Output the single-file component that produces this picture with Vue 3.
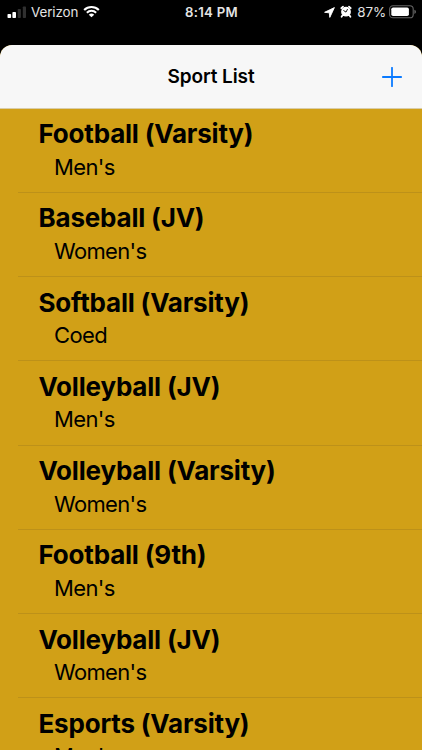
<template>
  <div class="phone">
    <header class="status-bar">
      <div class="status-left">
        <svg class="signal" width="20" height="14" viewBox="0 0 20 14">
          <rect x="0.5" y="9" width="3.6" height="4" rx="0.8" fill="#fff" />
          <rect x="5.4" y="7" width="3.6" height="6" rx="0.8" fill="#fff" />
          <rect x="10.7" y="4" width="3.2" height="9" rx="0.8" fill="#303030" />
          <rect x="15.8" y="1.5" width="3.2" height="11.5" rx="0.8" fill="#303030" />
        </svg>
        <span class="carrier">Verizon</span>
        <svg class="wifi" width="17" height="13" viewBox="0 0 18 14">
          <path d="M1.1 5.3a11.4 11.4 0 0 1 15.8 0" fill="none" stroke="#fff" stroke-width="2.3" />
          <path d="M4 8.3a7.2 7.2 0 0 1 10 0" fill="none" stroke="#fff" stroke-width="2.2" />
          <path d="M6.1 10.5a4.2 4.2 0 0 1 5.8 0L9 13.3z" fill="#fff" />
        </svg>
      </div>
      <div class="time">8:14 PM</div>
      <div class="status-right">
        <svg class="location" width="11" height="11" viewBox="0 0 11 11">
          <path d="M10.4 0.6L0.6 5.3L5.3 5.8L5.8 10.4z" fill="#fff" stroke="#fff" stroke-width="0.9" stroke-linejoin="round" />
        </svg>
        <svg class="alarm" width="12" height="13" viewBox="0 0 12 13">
          <circle cx="6" cy="6.7" r="4.9" fill="#fff" />
          <path d="M1.3 3.1L3 1.6M9 1.6L10.7 3.1M2.4 10.5L1.6 11.7M9.6 10.5L10.4 11.7" stroke="#fff" stroke-width="1.8" stroke-linecap="round" />
          <path d="M3.7 5.6L6 7.1L7.4 4.4" fill="none" stroke="#000" stroke-width="0.9" stroke-linecap="round" />
        </svg>
        <span class="percent">87%</span>
        <svg class="battery" width="28" height="14" viewBox="0 0 28 14">
          <rect x="0.6" y="0.8" width="23.6" height="12" rx="3.4" fill="none" stroke="#666" stroke-width="1.1" />
          <rect x="2.3" y="2.5" width="17.6" height="8.6" rx="1.8" fill="#fff" />
          <path d="M25.4 4.7q1.6 0.7 1.6 2.1t-1.6 2.1z" fill="#666" />
        </svg>
      </div>
    </header>

    <main class="sheet">
      <div class="nav-bar">
        <h1>Sport List</h1>
        <button class="add" aria-label="Add">
          <svg width="20" height="20" viewBox="0 0 20 20">
            <path d="M10 0.8V19.2M0.8 10H19.2" fill="none" stroke="#0a7aff" stroke-width="1.8" stroke-linecap="round" />
          </svg>
        </button>
      </div>

      <ul class="sports">
        <li v-for="(sport, index) in sports" :key="index">
          <div class="name">{{ sport.name }} ({{ sport.level }})</div>
          <div class="group">{{ sport.group }}</div>
        </li>
      </ul>
    </main>
  </div>
</template>

<script setup>
import { ref } from 'vue'

const sports = ref([
  { name: 'Football', level: 'Varsity', group: "Men's" },
  { name: 'Baseball', level: 'JV', group: "Women's" },
  { name: 'Softball', level: 'Varsity', group: 'Coed' },
  { name: 'Volleyball', level: 'JV', group: "Men's" },
  { name: 'Volleyball', level: 'Varsity', group: "Women's" },
  { name: 'Football', level: '9th', group: "Men's" },
  { name: 'Volleyball', level: 'JV', group: "Women's" },
  { name: 'Esports', level: 'Varsity', group: "Men's" },
])
</script>

<style>
body {
  margin: 0;
  background: #000;
}
</style>

<style scoped>
.phone {
  display: flex;
  flex-direction: column;
  height: 750px;
  overflow: hidden;
  background: #000;
  color: #000;
  font-family: Inter, "Liberation Sans", sans-serif;
}

.status-bar {
  display: grid;
  grid-template-columns: 1fr auto 1fr;
  align-items: center;
  flex: none;
  height: 24px;
  padding: 0 6px 0 7px;
  margin-bottom: 21px;
  color: #e4e4e4;
  font-size: 13.4px;
}

.status-left,
.status-right {
  display: flex;
  align-items: center;
}

.status-right {
  justify-content: flex-end;
}

.signal {
  margin-top: -1px;
}

.carrier {
  margin-left: 4px;
  letter-spacing: -0.1px;
}

.wifi {
  margin-left: 5px;
  margin-top: -1px;
}

.time {
  font-weight: 600;
  font-size: 13.2px;
  letter-spacing: 0.3px;
}

.alarm {
  margin-left: 5px;
  margin-top: -2px;
}

.percent {
  margin-left: 5px;
  letter-spacing: -0.1px;
}

.battery {
  margin-left: 3px;
  margin-right: -1px;
  margin-top: -1px;
}

.sheet {
  display: flex;
  flex-direction: column;
  flex: 1;
  min-height: 0;
  overflow: hidden;
  border-radius: 12px 12px 0 0;
  background: #d1a017;
}

.nav-bar {
  display: grid;
  grid-template-columns: 1fr auto 1fr;
  align-items: center;
  flex: none;
  height: 63.5px;
  box-sizing: border-box;
  padding: 1px 20px 0;
  border-bottom: 1px solid #d9cda9;
  background: #f7f7f7;
}

.nav-bar h1 {
  grid-column: 2;
  margin: 0;
  font-size: 19px;
  font-weight: 600;
  letter-spacing: -0.1px;
}

.add {
  display: flex;
  justify-self: end;
  padding: 0;
  border: 0;
  background: none;
}

.sports {
  margin: 0;
  padding: 0;
  list-style: none;
}

.sports li {
  height: 84.25px;
  box-sizing: border-box;
  margin-left: 18px;
  padding: 9.5px 0 0 20.5px;
  border-bottom: 1px solid #bd9119;
}

.name {
  font-size: 26px;
  font-weight: 700;
  line-height: 32px;
  letter-spacing: -0.2px;
}

.group {
  margin-top: 2.5px;
  padding-left: 15.5px;
  font-size: 22px;
  line-height: 28px;
  letter-spacing: -0.65px;
}
</style>
